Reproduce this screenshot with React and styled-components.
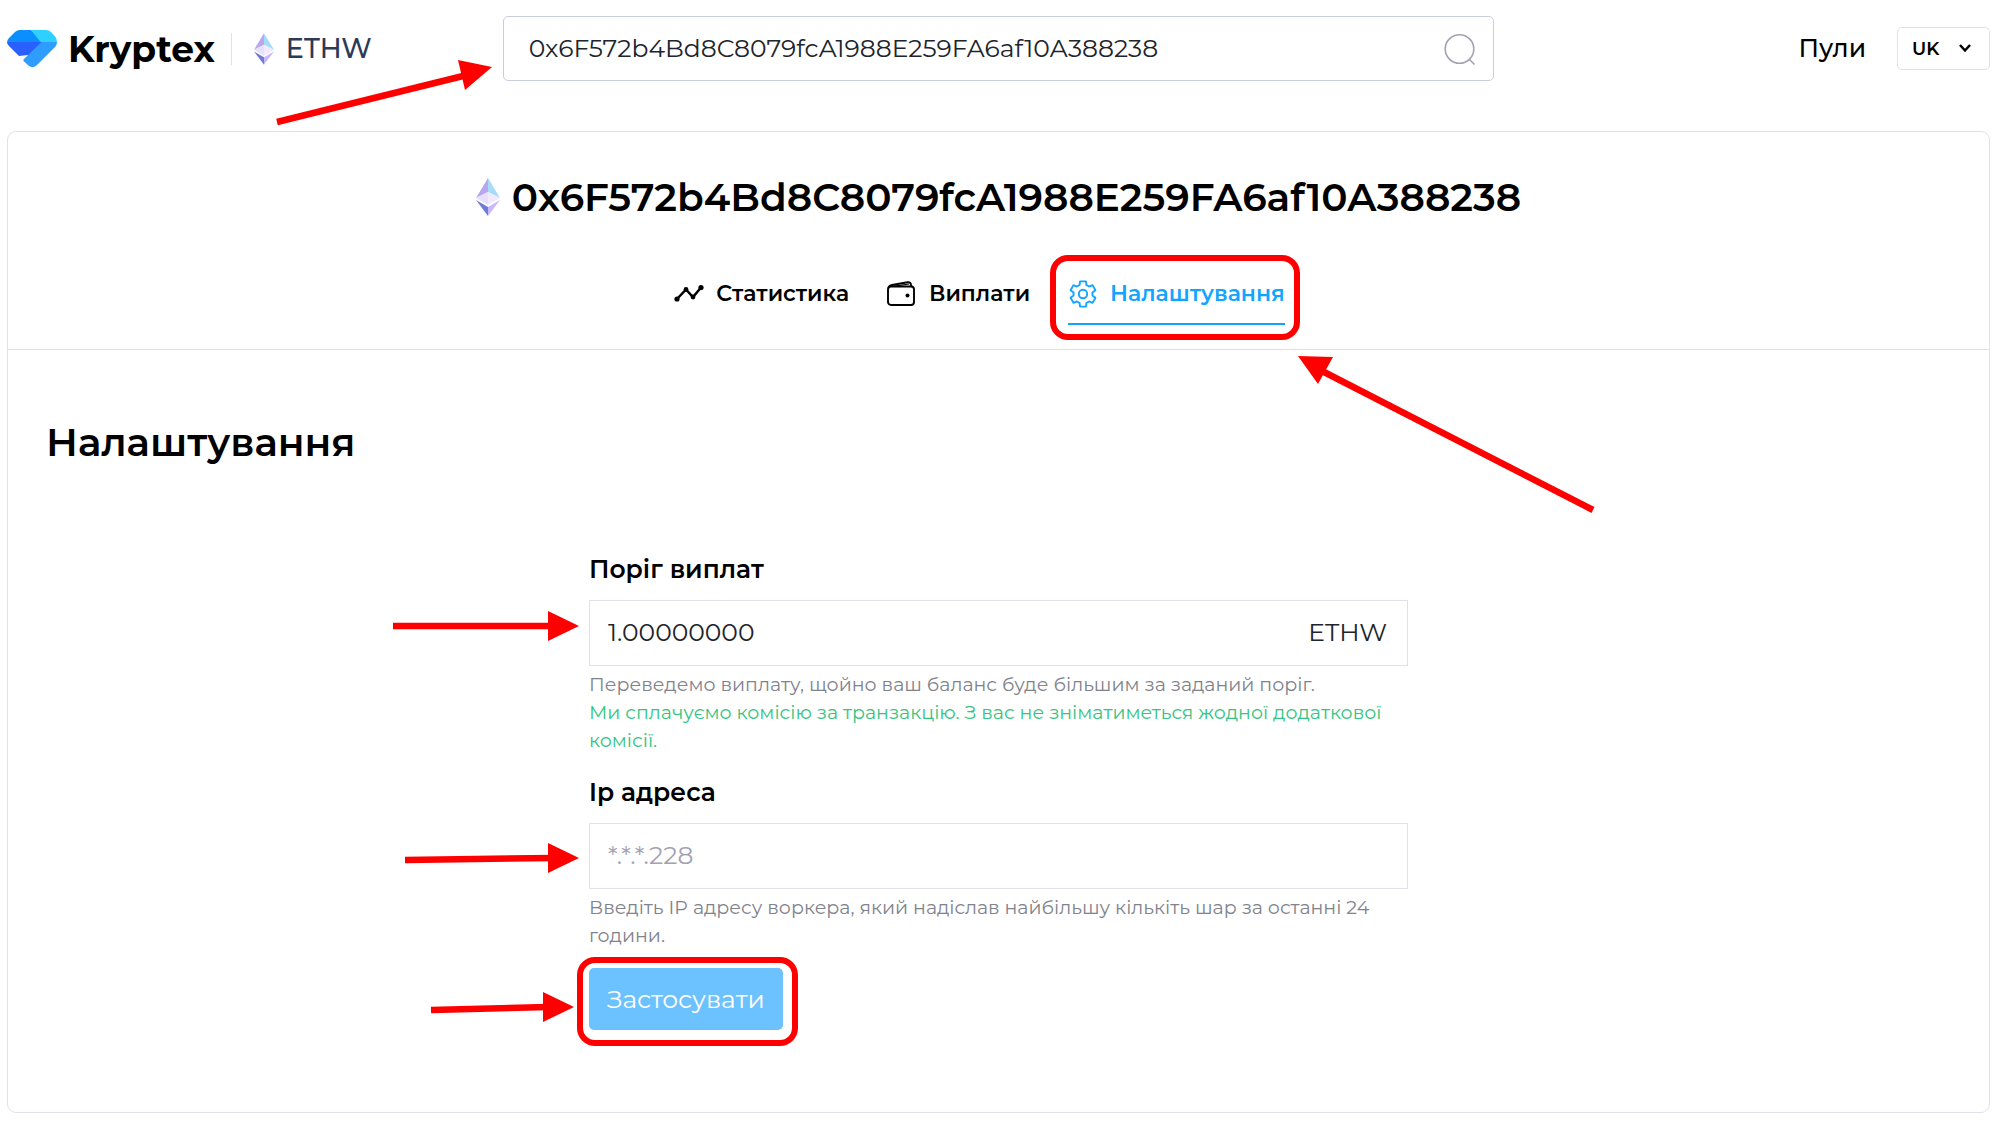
import React from "react";
import styled, { createGlobalStyle, css } from "styled-components";

const ADDRESS = "0x6F572b4Bd8C8079fcA1988E259FA6af10A388238";

const color = {
  ink: "#000000",
  body: "#20242c",
  navy: "#2b3a59",
  line: "#e1e1ea",
  inputLine: "#c9ced8",
  muted: "#7f838c",
  faint: "#a3a1b2",
  green: "#35c481",
  blue: "#12a5ff",
  button: "#6cc1ff",
  mark: "#ff0000",
};

const GlobalStyle = createGlobalStyle`
  *, *::before, *::after { box-sizing: border-box; }
  body {
    margin: 0;
    background: #ffffff;
    color: ${color.ink};
    font-family: Montserrat, Inter, "Noto Sans", sans-serif;
    font-size: 25px;
  }
  input, button, select { font: inherit; color: inherit; }
  a { color: inherit; text-decoration: none; }
`;

const Page = styled.div`
  display: flex;
  flex-direction: column;
  gap: 50px;
  min-height: 100vh;
  padding: 16px 10px 11px 7px;
`;

const Header = styled.header`
  display: grid;
  grid-template-columns: 1fr 2fr 1fr;
  align-items: center;
`;

const Brand = styled.div`
  display: flex;
  align-items: center;
`;

const BrandLink = styled.a`
  display: flex;
  align-items: center;
  gap: 11px;
  padding-right: 16px;
  font-size: 36px;
  font-weight: 700;
  line-height: 40px;
`;

const CoinLink = styled.a`
  display: flex;
  align-items: center;
  gap: 12px;
  height: 32px;
  padding-left: 22px;
  border-left: 1px solid ${color.line};
  color: ${color.navy};
  font-size: 27px;
  font-weight: 500;
`;

const Search = styled.form`
  position: relative;
  display: flex;
  align-items: center;
  height: 65px;
  padding: 0 17px 0 25px;
  border: 1px solid ${color.inputLine};
  border-radius: 5px;
`;

const BareInput = styled.input`
  flex: 1;
  min-width: 0;
  height: 100%;
  padding: 0 0 2px;
  border: 0;
  outline: 0;
  background: transparent;
  color: ${color.body};
  font-size: 25px;
  &::placeholder {
    color: ${color.faint};
    opacity: 1;
  }
`;

const IconButton = styled.button`
  display: flex;
  padding: 0;
  border: 0;
  background: none;
  cursor: pointer;
`;

const HeaderNav = styled.nav`
  display: flex;
  align-items: center;
  justify-content: flex-end;
  gap: 31px;
`;

const NavLink = styled.a`
  padding-bottom: 2px;
  font-size: 25px;
  font-weight: 500;
  line-height: 32px;
`;

const SelectBox = styled.div`
  position: relative;
  display: flex;
`;

const LanguageSelect = styled.select`
  width: 93px;
  height: 43px;
  padding: 0 14px;
  border: 1px solid ${color.line};
  border-radius: 5px;
  background: #ffffff;
  appearance: none;
  font-size: 18px;
  font-weight: 600;
`;

const SelectChevron = styled.svg`
  position: absolute;
  top: 16px;
  right: 18px;
  pointer-events: none;
`;

const Card = styled.main`
  flex: 1;
  border: 1px solid ${color.line};
  border-radius: 9px;
`;

const CardHeader = styled.div`
  display: flex;
  flex-direction: column;
  align-items: center;
  gap: 59px;
  padding: 41px 0 24px;
  border-bottom: 1px solid ${color.line};
`;

const WalletTitle = styled.h1`
  display: flex;
  align-items: center;
  gap: 12px;
  margin: 0;
  font-size: 39px;
  font-weight: 600;
  line-height: 48px;
`;

const Tabs = styled.nav`
  display: flex;
`;

const Tab = styled.a`
  position: relative;
  display: flex;
  align-items: center;
  gap: 12px;
  margin-right: 38px;
  padding-bottom: 15px;
  border-bottom: 2px solid transparent;
  font-size: 22px;
  font-weight: 600;
  line-height: 28px;
  ${(p) =>
    p.$active &&
    css`
      border-color: ${color.blue};
      color: ${color.blue};
    `}
`;

const CardBody = styled.section`
  padding: 68px 38px 40px;
`;

const SectionTitle = styled.h2`
  margin: 0 0 87px;
  font-size: 39px;
  font-weight: 600;
  line-height: 48px;
`;

const SettingsForm = styled.form`
  display: flex;
  flex-direction: column;
  align-items: flex-start;
  width: 100%;
  max-width: 819px;
  margin: 0 auto;
`;

const Field = styled.div`
  width: 100%;
  margin-bottom: ${(p) => (p.$last ? 18 : 21)}px;
`;

const Label = styled.label`
  display: block;
  margin-bottom: 15px;
  font-size: 25px;
  font-weight: 600;
  line-height: 32px;
`;

const InputBox = styled.div`
  position: relative;
  display: flex;
  align-items: center;
  height: 66px;
  margin-bottom: 5px;
  padding: 0 20px 0 18px;
  border: 1px solid ${color.line};
`;

const Unit = styled.span`
  padding-bottom: 2px;
  color: ${color.body};
`;

const Hint = styled.p`
  margin: 0;
  color: ${(p) => (p.$positive ? color.green : color.muted)};
  font-size: 19px;
  line-height: 28px;
`;

const SubmitButton = styled.button`
  position: relative;
  height: 62px;
  padding: 0 18px;
  border: 0;
  border-radius: 5px;
  background: ${color.button};
  color: #ffffff;
  font-size: 25px;
  cursor: pointer;
`;

const Frame = styled.span`
  position: absolute;
  inset: ${(p) => p.$inset};
  border: 6px solid ${color.mark};
  border-radius: 18px;
  pointer-events: none;
`;

const ArrowSvg = styled.svg`
  position: absolute;
  z-index: 1;
  left: ${(p) => p.$left}px;
  top: ${(p) => p.$top}px;
  overflow: visible;
  pointer-events: none;
`;

function Arrow({ left, top, width, height, shaft, head }) {
  return (
    <ArrowSvg $left={left} $top={top} width={width} height={height} aria-hidden="true">
      <path d={shaft} stroke={color.mark} strokeWidth="6.5" fill="none" />
      <path d={head} fill={color.mark} />
    </ArrowSvg>
  );
}

function KryptexMark() {
  return (
    <svg width="50" height="38" viewBox="0 0 50 38" aria-hidden="true">
      <path d="M0 12.5Q0 10 2 8L8 2Q10 0 13 0H24L36 12.5Z" fill="#0b8fff" />
      <path d="M24 0H39Q42 0 44 2L48.500 7Q50 9 50 12.500H34Z" fill="#2fd0ff" />
      <path d="M0 12H36L23 26L21 25L12 26L2 16Q0 14 0 12Z" fill="#2a60ff" />
      <path d="M34.500 12H50Q50 15 48 17L29.500 35.500Q25.500 38.500 22 36L16.500 31Q16 30 17 29Z" fill="#2f9dff" />
    </svg>
  );
}

function EthIcon({ width, height }) {
  return (
    <svg width={width} height={height} viewBox="0 0 24 38" aria-hidden="true">
      <path d="M12 0L0 20L12 14Z" fill="#b9a6ee" />
      <path d="M12 0L24 20L12 14Z" fill="#a6dcf5" />
      <path d="M12 14L0 20L12 27Z" fill="#e6e0fa" />
      <path d="M12 14L24 20L12 27Z" fill="#f1e9fd" />
      <path d="M0 22L12 29V38Z" fill="#6f7bd8" />
      <path d="M24 22L12 29V38Z" fill="#c9b8fb" />
    </svg>
  );
}

function SearchIcon() {
  return (
    <svg width="32" height="34" viewBox="0 0 32 34" fill="none" stroke={color.faint} strokeWidth="1.6" aria-hidden="true">
      <circle cx="15.500" cy="17" r="14.300" />
      <path d="M25.500 27.500L30.500 32.500" />
    </svg>
  );
}

function StatsIcon() {
  return (
    <svg width="30" height="28" viewBox="0 0 30 28" aria-hidden="true">
      <path d="M3 19L12 9.500L19 17L27 7.500" fill="none" stroke="currentColor" strokeWidth="2.500" />
      <circle cx="3" cy="19" r="2.600" />
      <circle cx="12" cy="9.500" r="2.400" />
      <circle cx="19" cy="17" r="2.400" />
      <circle cx="27" cy="7.500" r="2.600" />
    </svg>
  );
}

function WalletIcon() {
  return (
    <svg width="30" height="28" viewBox="0 0 30 28" fill="none" stroke="currentColor" strokeWidth="1.900" aria-hidden="true">
      <rect x="1" y="6.500" width="26" height="18.500" rx="3" />
      <path d="M1.500 8Q2 5.500 5 5L20.500 2.300Q23.500 2 24 4.500L24.500 6.500" />
      <path d="M6 6.300L22 4" strokeWidth="1.200" />
      <circle cx="20.500" cy="15.500" r="2" fill="currentColor" stroke="none" />
    </svg>
  );
}

const gearPath = (() => {
  const teeth = 6;
  const points = [];
  for (let i = 0; i < teeth; i += 1) {
    const base = -90 + (i * 360) / teeth;
    [
      [-21, 9.6],
      [-13, 13],
      [13, 13],
      [21, 9.6],
    ].forEach(([offset, radius]) => {
      const angle = ((base + offset) * Math.PI) / 180;
      points.push(`${(15 + radius * Math.cos(angle)).toFixed(2)} ${(14 + radius * Math.sin(angle)).toFixed(2)}`);
    });
  }
  return `M${points.join("L")}Z`;
})();

function GearIcon() {
  return (
    <svg width="30" height="28" viewBox="0 0 30 28" fill="none" stroke="currentColor" strokeWidth="1.900" strokeLinejoin="round" aria-hidden="true">
      <path d={gearPath} />
      <circle cx="15" cy="14" r="4.200" />
    </svg>
  );
}

export default function App() {
  return (
    <>
      <GlobalStyle />
      <Page>
        <Header>
          <Brand>
            <BrandLink href="#">
              <KryptexMark />
              Kryptex
            </BrandLink>
            <CoinLink href="#ethw">
              <EthIcon width={20} height={32} />
              ETHW
            </CoinLink>
          </Brand>
          <Search onSubmit={(e) => e.preventDefault()}>
            <BareInput aria-label="Адреса гаманця" defaultValue={ADDRESS} />
            <IconButton type="submit" aria-label="Пошук">
              <SearchIcon />
            </IconButton>
            <Arrow left={-227} top={42} width={216} height={66} shaft="M0 63L186 17" head="M181 1L215 8L188 31Z" />
          </Search>
          <HeaderNav>
            <NavLink href="#pools">Пули</NavLink>
            <SelectBox>
              <LanguageSelect aria-label="Мова" defaultValue="UK">
                <option>UK</option>
                <option>EN</option>
              </LanguageSelect>
              <SelectChevron width="14" height="10" viewBox="0 0 14 10">
                <path d="M2 2L7 7.500L12 2" fill="none" stroke="#000000" strokeWidth="2.500" />
              </SelectChevron>
            </SelectBox>
          </HeaderNav>
        </Header>

        <Card>
          <CardHeader>
            <WalletTitle>
              <EthIcon width={24} height={38} />
              {ADDRESS}
            </WalletTitle>
            <Tabs>
              <Tab href="#stats">
                <StatsIcon />
                Статистика
              </Tab>
              <Tab href="#payouts">
                <WalletIcon />
                Виплати
              </Tab>
              <Tab href="#settings" $active>
                <GearIcon />
                Налаштування
                <Frame $inset="-25px -15px -17px -18px" />
                <Arrow left={230} top={76} width={296} height={156} shaft="M26 16L295 154" head="M0 0L35 1L20 28Z" />
              </Tab>
            </Tabs>
          </CardHeader>

          <CardBody>
            <SectionTitle>Налаштування</SectionTitle>
            <SettingsForm onSubmit={(e) => e.preventDefault()}>
              <Field>
                <Label htmlFor="threshold">Поріг виплат</Label>
                <InputBox>
                  <BareInput id="threshold" defaultValue="1.00000000" />
                  <Unit>ETHW</Unit>
                  <Arrow left={-197} top={10} width={186} height={30} shaft="M0 15H160" head="M155 0L186 15L155 30Z" />
                </InputBox>
                <Hint>Переведемо виплату, щойно ваш баланс буде більшим за заданий поріг.</Hint>
                <Hint $positive>
                  Ми сплачуємо комісію за транзакцію. З вас не зніматиметься жодної додаткової комісії.
                </Hint>
              </Field>
              <Field $last>
                <Label htmlFor="ip">Ip адреса</Label>
                <InputBox>
                  <BareInput id="ip" placeholder="*.*.*.228" />
                  <Arrow left={-185} top={19} width={174} height={30} shaft="M0 17L148 15" head="M143 0L174 15L143 30Z" />
                </InputBox>
                <Hint>Введіть IP адресу воркера, який надіслав найбільшу кількіть шар за останні 24 години.</Hint>
              </Field>
              <SubmitButton type="submit">
                Застосувати
                <Frame $inset="-11px -15px -16px -12px" />
                <Arrow left={-158} top={24} width={143} height={30} shaft="M0 18L117 15" head="M112 0L143 15L112 30Z" />
              </SubmitButton>
            </SettingsForm>
          </CardBody>
        </Card>
      </Page>
    </>
  );
}
